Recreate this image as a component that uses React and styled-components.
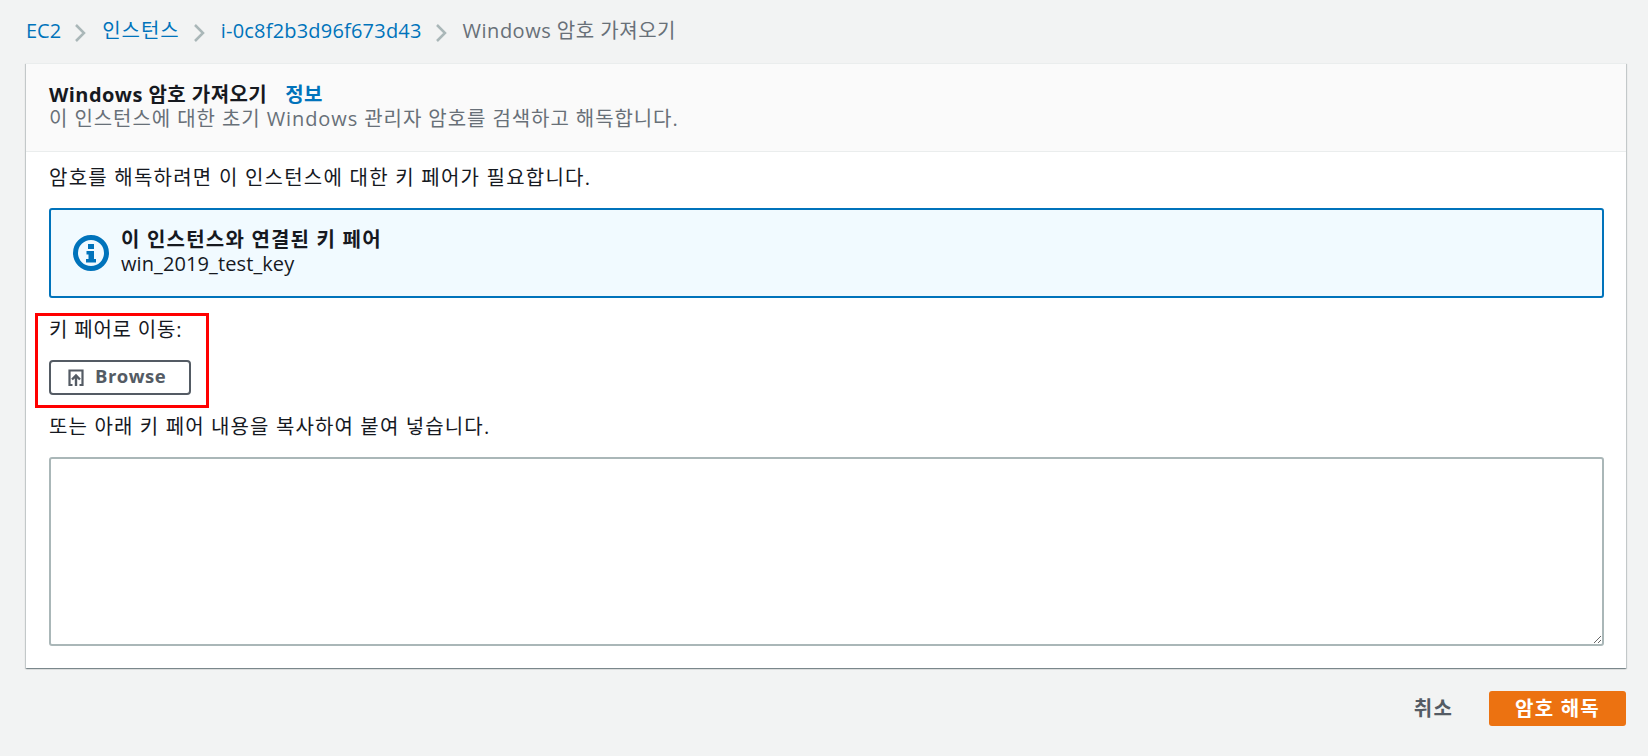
import styled, { createGlobalStyle } from "styled-components";

const GlobalStyle = createGlobalStyle`
  html, body {
    margin: 0;
    padding: 0;
    background: #f2f3f3;
    font-family: "Open Sans", "Noto Sans CJK KR", sans-serif;
    font-size: 20px;
    line-height: 24px;
    color: #16191f;
  }
`;

const Page = styled.div`
  height: 756px;
  box-sizing: border-box;
  padding: 19px 22px 0 26px;
  overflow: hidden;
`;

const Breadcrumbs = styled.nav`
  display: flex;
  align-items: center;
  height: 24px;
  margin-bottom: 20px;
`;

const Crumb = styled.a`
  color: ${(p) => (p.$current ? "#687078" : "#0073bb")};
  letter-spacing: ${(p) => p.$track || 0}px;
`;

// chevron sits a little lower than the text line
const Chevron = styled.svg`
  width: 12px;
  height: 18px;
  margin: 3px 16px 0 13px;
  color: #aab7b8;
`;

const Card = styled.section`
  background: #fff;
  border-top: 1px solid #eaeded;
  box-shadow: 0 1px 1px 0 rgba(0, 28, 36, 0.3), 1px 1px 1px 0 rgba(0, 28, 36, 0.15), -1px 1px 1px 0 rgba(0, 28, 36, 0.15);
`;

const CardHeader = styled.header`
  height: 88px;
  box-sizing: border-box;
  padding: 19px 24px 0 23px;
  background: #fafafa;
  border-bottom: 1px solid #eaeded;
`;

const TitleRow = styled.div`
  display: flex;
  gap: 18px;
  height: 24px;
  font-weight: 700;
  letter-spacing: 0.45px;
`;

const InfoLink = styled.a`
  color: #0073bb;
`;

const Description = styled.div`
  color: #687078;
  letter-spacing: 0.92px;
`;

const CardBody = styled.div`
  padding: 14px 22px 22px 23px;
`;

const Intro = styled.div`
  letter-spacing: 1.23px;
`;

const Alert = styled.div`
  display: flex;
  align-items: center;
  gap: 12px;
  height: 90px;
  box-sizing: border-box;
  margin-top: 18px;
  padding: 0 22px;
  background: #f1faff;
  border: 2px solid #0073bb;
  border-radius: 3px;
`;

const AlertText = styled.div`
  padding-bottom: 2px;
`;

const AlertTitle = styled.div`
  font-weight: 700;
  letter-spacing: 1.2px;
`;

const KeyName = styled.div`
  letter-spacing: 0.1px;
`;

const Highlight = styled.div`
  width: 174px;
  height: 95px;
  box-sizing: border-box;
  margin: 15px 0 0 -14px;
  padding: 2px 0 0 11px;
  border: 3px solid #ff0000;
`;

const GoToLabel = styled.div`
  letter-spacing: 0.8px;
`;

const BrowseButton = styled.button`
  display: flex;
  align-items: center;
  gap: 11px;
  width: 142px;
  height: 35px;
  box-sizing: border-box;
  margin-top: 18px;
  padding: 0 0 0 17px;
  background: #fff;
  border: 2px solid #545b64;
  border-radius: 4px;
  color: #545b64;
  font: 700 18.5px/24px "Open Sans", "Noto Sans CJK KR", sans-serif;
  letter-spacing: 0.5px;
`;

const BrowseLabel = styled.span`
  margin-top: -3px;
`;

const PasteLabel = styled.div`
  margin-top: 7px;
  letter-spacing: 1.13px;
`;

const KeyInput = styled.textarea`
  display: block;
  width: 100%;
  height: 189px;
  box-sizing: border-box;
  margin-top: 18px;
  background: #fff;
  border: 2px solid #aab7b8;
  border-radius: 3px;
`;

const Footer = styled.footer`
  display: flex;
  justify-content: flex-end;
  align-items: center;
  gap: 36px;
  margin-top: 23px;
`;

const CancelButton = styled.button`
  padding: 0;
  background: none;
  border: none;
  color: #545b64;
  font: 700 20px/24px "Open Sans", "Noto Sans CJK KR", sans-serif;
  letter-spacing: 1.2px;
`;

const SubmitButton = styled.button`
  width: 137px;
  height: 35px;
  padding: 0;
  background: #ec7211;
  border: none;
  border-radius: 3px;
  color: #fff;
  font: 700 20px/24px "Open Sans", "Noto Sans CJK KR", sans-serif;
  letter-spacing: 1.2px;
`;

const Sep = () => (
  <Chevron viewBox="0 0 12 18" fill="none" stroke="currentColor" strokeWidth="2.5">
    <path d="M2 1l8 8-8 8" />
  </Chevron>
);

export default function App() {
  return (
    <Page>
      <GlobalStyle />
      <Breadcrumbs>
        <Crumb>EC2</Crumb>
        <Sep />
        <Crumb $track={1}>인스턴스</Crumb>
        <Sep />
        <Crumb $track={0.2}>i-0c8f2b3d96f673d43</Crumb>
        <Sep />
        <Crumb $current $track={0.5}>Windows 암호 가져오기</Crumb>
      </Breadcrumbs>
      <Card>
        <CardHeader>
          <TitleRow>
            <span>Windows 암호 가져오기</span>
            <InfoLink>정보</InfoLink>
          </TitleRow>
          <Description>이 인스턴스에 대한 초기 Windows 관리자 암호를 검색하고 해독합니다.</Description>
        </CardHeader>
        <CardBody>
          <Intro>암호를 해독하려면 이 인스턴스에 대한 키 페어가 필요합니다.</Intro>
          <Alert>
            <svg width="36" height="36" viewBox="0 0 36 36">
              <circle cx="18" cy="18" r="15.5" fill="none" stroke="#0073bb" strokeWidth="5" />
              <path d="M15 9h6v5h-6zM13.500 16h7.500v8h2v3.500H13V24h2.500v-4.500h-2z" fill="#0073bb" />
            </svg>
            <AlertText>
              <AlertTitle>이 인스턴스와 연결된 키 페어</AlertTitle>
              <KeyName>win_2019_test_key</KeyName>
            </AlertText>
          </Alert>
          <Highlight>
            <GoToLabel>키 페어로 이동:</GoToLabel>
            <BrowseButton>
              <svg width="16" height="17" viewBox="0 0 16 17" fill="none" stroke="#545b64" strokeWidth="2">
                <path d="M4.500 16H1.500V1.500h13V16h-3" strokeWidth="2.200" />
                <path d="M8 17V7.500M4 10.500L8 6.500l4 4" strokeWidth="2.400" />
              </svg>
              <BrowseLabel>Browse</BrowseLabel>
            </BrowseButton>
          </Highlight>
          <PasteLabel>또는 아래 키 페어 내용을 복사하여 붙여 넣습니다.</PasteLabel>
          <KeyInput />
        </CardBody>
      </Card>
      <Footer>
        <CancelButton>취소</CancelButton>
        <SubmitButton>암호 해독</SubmitButton>
      </Footer>
    </Page>
  );
}
